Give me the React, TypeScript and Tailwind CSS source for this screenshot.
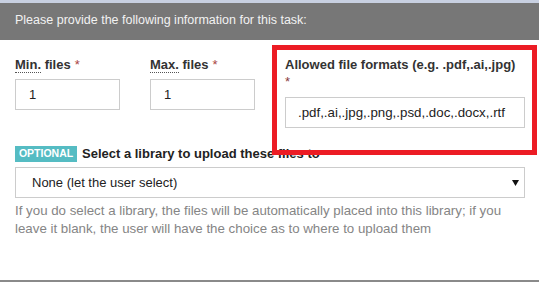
import React from "react";

function Required({ block }: { block?: boolean }) {
  return (
    <span className={block ? "block font-normal text-[#8a3b3b]" : "ml-1 font-normal text-[#a94442]"}>
      *
    </span>
  );
}

function NumberField({ abbr, rest }: { abbr: string; rest: string }) {
  return (
    <div className="w-[105px] pt-[16px]">
      <label className="block text-[13px] font-bold leading-[18px] text-[#333]">
        <span className="border-b border-dotted border-[#555]">{abbr}</span> {rest}
        <Required />
      </label>
      <input
        defaultValue="1"
        className="mt-[5px] block h-[31px] w-[105px] border border-[#ccc] px-[13px] text-[13px] text-[#222] outline-none"
      />
    </div>
  );
}

export default function App() {
  return (
    <div className="relative h-[285px] w-[539px] overflow-hidden bg-white font-['Liberation_Sans',Arial,sans-serif]">
      <div className="flex h-[40px] items-center border-t-[3px] border-[#c8d0e1] bg-[#777] px-[15px] pb-[2px] text-[12.5px] text-[#f2f2f2]">
        Please provide the following information for this task:
      </div>

      <div className="px-[15px]">
        <div className="flex items-start">
          <NumberField abbr="Min." rest="files" />
          <div className="ml-[30px]">
            <NumberField abbr="Max." rest="files" />
          </div>
          <div className="ml-[30px] w-[240px] pt-[16px]">
            <label className="block text-[13px] font-bold leading-[17px] text-[#333]">
              Allowed file formats (e.g. .pdf,.ai,.jpg)
              <Required block />
            </label>
            <input
              defaultValue=".pdf,.ai,.jpg,.png,.psd,.doc,.docx,.rtf"
              className="mt-[7px] block h-[31px] w-[240px] border border-[#ccc] px-[12px] text-[13.3px] text-[#222] outline-none"
            />
          </div>
        </div>

        <div className="mt-[18px] flex items-center">
          <span className="flex h-[16px] w-[62px] items-center justify-center bg-[#55bcc3] text-[10.5px] font-bold text-white">
            OPTIONAL
          </span>
          <span className="ml-[5px] text-[13px] font-bold leading-[16px] text-[#222]">
            Select a library to upload these files to
          </span>
        </div>

        <div className="mt-[5px] flex h-[31px] w-[510px] items-center justify-between border border-[#ccc] pl-[16px] pr-[5px] text-[13px] text-[#222]">
          <span>None (let the user select)</span>
          <svg width="7" height="6" viewBox="0 0 7 6">
            <path d="M0 0h7L3.5 6z" fill="#111" />
          </svg>
        </div>

        <p className="mt-[4px] w-[510px] text-[13.3px] leading-[18px] text-[#858585]">
          If you do select a library, the files will be automatically placed into this library; if you
          leave it blank, the user will have the choice as to where to upload them
        </p>
      </div>

      <div className="absolute left-0 top-[280px] h-[2px] w-full bg-[#8a8a8a]" />

      {/* red annotation box drawn over the form */}
      <div className="pointer-events-none absolute left-[272px] top-[45px] h-[110px] w-[265px] border-[5px] border-[#ec1c24]" />
    </div>
  );
}
